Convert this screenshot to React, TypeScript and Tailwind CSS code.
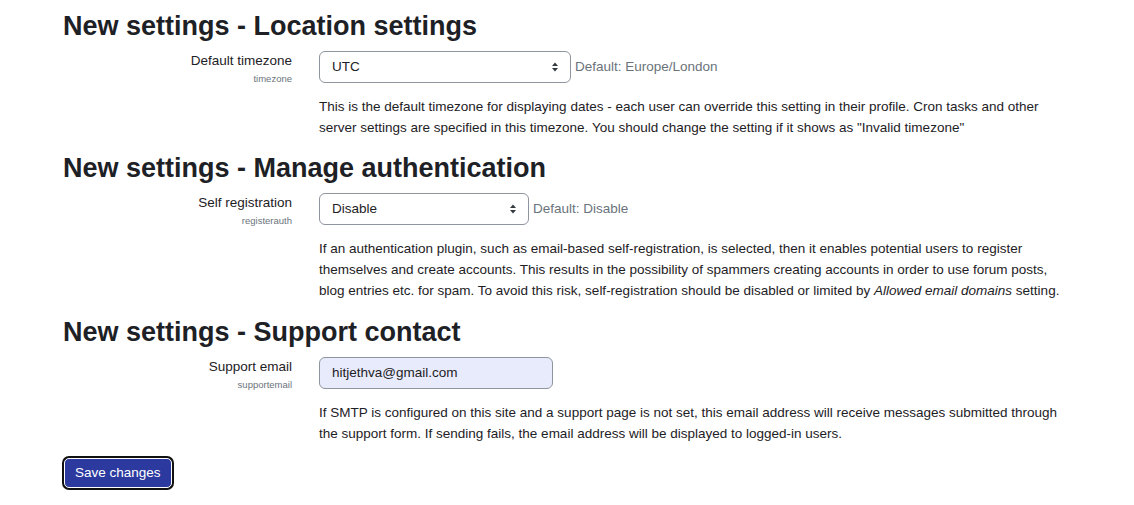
import React from 'react';

const SelectArrows = () => (
  <svg width="8" height="12" viewBox="0 0 8 12" className="text-[#343a40]">
    <path d="M4 1.5 L7 5 H1 Z" fill="currentColor" />
    <path d="M4 10.5 L7 7 H1 Z" fill="currentColor" />
  </svg>
);

const Heading = ({ children }: { children: React.ReactNode }) => (
  <h3 className="text-[27px] leading-[32px] font-bold text-[#1d2125]">{children}</h3>
);

const Label = ({ title, name }: { title: string; name: string }) => (
  <div className="w-[229px] shrink-0 text-right pt-[1px]">
    <p className="text-[13.5px] leading-[18px] text-[#1d2125]">{title}</p>
    <p className="text-[9.5px] leading-[14px] mt-[2px] text-[#6a737b]">{name}</p>
  </div>
);

const SettingRow = ({
  title,
  name,
  control,
  hint,
  children,
}: {
  title: string;
  name: string;
  control: React.ReactNode;
  hint?: string;
  children: React.ReactNode;
}) => (
  <div className="mt-[9px]">
    <div className="flex gap-[27px]">
      <Label title={title} name={name} />
      <div className="flex-1">
        <div className="flex items-center gap-[4px]">
          {control}
          {hint && <span className="text-[13.5px] text-[#6a737b]">{hint}</span>}
        </div>
        <div className="mt-[13px] w-[748px] text-[13.5px] leading-[21px] text-[#1d2125]">
          {children}
        </div>
      </div>
    </div>
  </div>
);

const Select = ({ value, width }: { value: string; width: string }) => (
  <div
    className={`${width} h-[32px] flex items-center justify-between pl-[12px] pr-[11px] border border-[#8f959e] rounded-[6px] bg-white text-[13.5px] text-[#1d2125]`}
  >
    <span>{value}</span>
    <SelectArrows />
  </div>
);

export default function App() {
  return (
    <div
      className="min-h-[505px] bg-white pl-[63px] pt-[10px]"
      style={{ fontFamily: '"Liberation Sans", Arial, sans-serif' }}
    >
      <Heading>New settings - Location settings</Heading>
      <SettingRow
        title="Default timezone"
        name="timezone"
        control={<Select value="UTC" width="w-[252px]" />}
        hint="Default: Europe/London"
      >
        This is the default timezone for displaying dates - each user can override this setting in their profile. Cron tasks and other server settings are specified in this timezone. You should change the setting if it shows as "Invalid timezone"
      </SettingRow>

      <div className="mt-[14px]">
        <Heading>New settings - Manage authentication</Heading>
      </div>
      <SettingRow
        title="Self registration"
        name="registerauth"
        control={<Select value="Disable" width="w-[210px]" />}
        hint="Default: Disable"
      >
        If an authentication plugin, such as email-based self-registration, is selected, then it enables potential users to register themselves and create accounts. This results in the possibility of spammers creating accounts in order to use forum posts, blog entries etc. for spam. To avoid this risk, self-registration should be disabled or limited by <em>Allowed email domains</em> setting.
      </SettingRow>

      <div className="mt-[15px]">
        <Heading>New settings - Support contact</Heading>
      </div>
      <SettingRow
        title="Support email"
        name="supportemail"
        control={
          <div className="w-[234px] h-[32px] flex items-center px-[12px] border border-[#8f959e] rounded-[6px] bg-[#e8ebfb] text-[13.5px] text-[#1d2125]">
            hitjethva@gmail.com
          </div>
        }
      >
        If SMTP is configured on this site and a support page is not set, this email address will receive messages submitted through the support form. If sending fails, the email address will be displayed to logged-in users.
      </SettingRow>

      <div className="mt-[12px] -ml-[1px]">
        <button className="h-[34px] rounded-[7px] bg-[#111] p-[2px]">
          <span className="flex items-center h-[30px] px-[10px] rounded-[5px] border border-white bg-[#2c3aa0] text-[13.5px] text-white">
            Save changes
          </span>
        </button>
      </div>
    </div>
  );
}
